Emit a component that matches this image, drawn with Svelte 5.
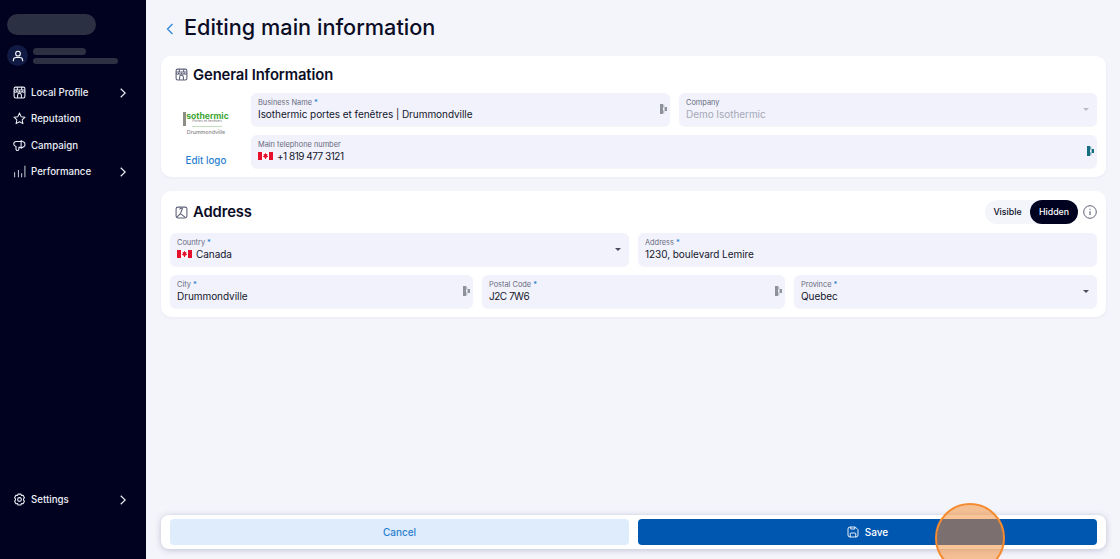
<script>
  const nav = [
    { label: "Local Profile", icon: "store", more: true },
    { label: "Reputation", icon: "star", more: false },
    { label: "Campaign", icon: "horn", more: false },
    { label: "Performance", icon: "bars", more: true }
  ];
</script>

{#snippet flag()}
  <svg class="flag" viewBox="0 0 15 8" aria-hidden="true">
    <rect width="15" height="8" fill="#fff" />
    <rect width="4" height="8" fill="#e8112d" />
    <rect x="11" width="4" height="8" fill="#e8112d" />
    <path d="M7.5 0.8 8.3 2.3 9.5 1.900 9.100 3.800 10.300 4.400 8.200 5.800 8 7H7L6.800 5.800 4.700 4.400 5.900 3.800 5.500 1.900 6.700 2.300Z" fill="#e8112d" />
  </svg>
{/snippet}

{#snippet ai(cls = "")}
  <svg class="ai {cls}" viewBox="0 0 7 10" aria-hidden="true">
    <rect x="0" y="0" width="3" height="10" fill="currentColor" />
    <rect x="3" y="0.6" width="1.300" height="3" fill="currentColor" opacity=".55" />
    <rect x="3" y="6.400" width="1.300" height="3" fill="currentColor" opacity=".55" />
    <rect x="4.600" y="3" width="2.400" height="4" fill="currentColor" />
  </svg>
{/snippet}

{#snippet storeIcon()}
  <svg class="ico" viewBox="0 0 24 24" fill="none" stroke="currentColor" stroke-width="2" aria-hidden="true">
    <rect x="2" y="2" width="20" height="20" rx="3" />
    <path d="M2 7.500h20M2 10c1.700 2 3.300 2 5 0 1.700 2 3.300 2 5 0 1.700 2 3.300 2 5 0 1.700 2 3.300 2 5 0M8.500 22v-5a3.500 3.500 0 0 1 7 0v5M8 2v5.500M16 2v5.500" />
  </svg>
{/snippet}

<div class="page">
  <aside class="side">
    <div class="brand"></div>
    <div class="user">
      <span class="avatar">
        <svg viewBox="0 0 24 24" fill="none" stroke="#fff" stroke-width="1.800" aria-hidden="true">
          <circle cx="12" cy="8" r="4" />
          <path d="M4 21v-1.500c0-3 2.500-5 5-5h6c2.500 0 5 2 5 5V21" />
        </svg>
      </span>
      <div class="user-lines">
        <span class="line short"></span>
        <span class="line long"></span>
      </div>
    </div>
    <nav>
      {#each nav as item}
        <div class="nav-item">
          {#if item.icon === "store"}
            {@render storeIcon()}
          {:else if item.icon === "star"}
            <svg class="ico" viewBox="0 0 24 24" fill="none" stroke="currentColor" stroke-width="1.900" stroke-linejoin="round" aria-hidden="true">
              <path d="M12 2l3 6.600 7.200.9-5.300 4.900 1.400 7.100-6.300-3.600-6.300 3.600 1.400-7.100L1.800 9.500 9 8.600z" />
            </svg>
          {:else if item.icon === "horn"}
            <svg class="ico" viewBox="0 0 24 24" fill="none" stroke="currentColor" stroke-width="2" stroke-linejoin="round" aria-hidden="true">
              <path d="M15 3l6 3.500c1.300.8 1.300 6.200 0 7L15 17zM15 4.500H6a4.500 4.500 0 0 0-1 8.900M15 15.500H10M5.500 13v5.500a2.700 2.700 0 0 0 5.400 0v-3" />
            </svg>
          {:else}
            <svg class="ico" viewBox="0 0 24 24" fill="none" stroke="currentColor" stroke-width="1.600" stroke-linecap="round" aria-hidden="true">
              <path d="M3 22v-8M10 22V10M16 22v-6M22 22V2" />
            </svg>
          {/if}
          <span>{item.label}</span>
          {#if item.more}
            <svg class="chev" viewBox="0 0 6 10" fill="none" stroke="currentColor" stroke-width="1.200" aria-hidden="true"><path d="M.7.7l4.500 4.300-4.500 4.300" /></svg>
          {/if}
        </div>
      {/each}
    </nav>
    <div class="nav-item settings">
      <svg class="ico" viewBox="0 0 24 24" fill="none" stroke="currentColor" stroke-width="2" stroke-linejoin="round" aria-hidden="true">
        <path d="M9.500 2h5l1.200 2.600 2.900-.3 2.500 4.300L19.400 11v2l1.700 2.400-2.500 4.300-2.900-.3L14.500 22h-5l-1.200-2.600-2.900.3-2.500-4.300L4.600 13v-2L2.900 8.600l2.500-4.300 2.900.3z" />
        <circle cx="12" cy="12" r="3.500" />
      </svg>
      <span>Settings</span>
      <svg class="chev" viewBox="0 0 6 10" fill="none" stroke="currentColor" stroke-width="1.200" aria-hidden="true"><path d="M.7.7l4.500 4.300-4.500 4.300" /></svg>
    </div>
  </aside>

  <main class="main">
    <header class="top">
      <svg class="back" viewBox="0 0 8 12" fill="none" stroke="#2f86d6" stroke-width="1.300" aria-hidden="true"><path d="M6.500 1l-5 5 5 5" /></svg>
      <h1>Editing main information</h1>
    </header>

    <section class="card general">
      <div class="card-title">
        <span class="title-ico">{@render storeIcon()}</span>
        <h2>General Information</h2>
      </div>
      <div class="general-body">
        <div class="logo-col">
          <div class="logo">
            <div class="logo-name"><i></i>sothermic</div>
            <div class="logo-sub">Portes et fenêtres</div>
            <div class="logo-city">Drummondville</div>
          </div>
          <span class="edit-logo">Edit logo</span>
        </div>
        <div class="general-fields">
          <div class="row g2">
            <div class="field">
              <label>Business Name<b>*</b></label>
              <div class="val">Isothermic portes et fenêtres | Drummondville</div>
              {@render ai("grey")}
            </div>
            <div class="field">
              <label>Company</label>
              <div class="val muted">Demo Isothermic</div>
              <span class="caret light"></span>
            </div>
          </div>
          <div class="field">
            <label>Main telephone number</label>
            <div class="val tight">{@render flag()}+1 819 477 3121</div>
            {@render ai("teal")}
          </div>
        </div>
      </div>
    </section>

    <section class="card address">
      <div class="card-title between">
        <div class="title-left">
          <span class="title-ico">
            <svg class="ico" viewBox="0 0 24 24" fill="none" stroke="currentColor" stroke-width="2" aria-hidden="true">
              <rect x="2" y="2" width="20" height="20" rx="3.500" />
              <path d="M3 21l7-7 3.500-9M10 14l9 7M8.500 6.500a4 4 0 0 1 6-1.500" />
            </svg>
          </span>
          <h2>Address</h2>
        </div>
        <div class="vis">
          <div class="toggle">
            <span class="opt">Visible</span>
            <span class="opt on">Hidden</span>
          </div>
          <svg class="info" viewBox="0 0 16 16" fill="none" stroke="#5b5f70" stroke-width="1.100" aria-hidden="true">
            <circle cx="8" cy="8" r="7.200" />
            <path d="M8 7v4.500M8 4.300v1.200" stroke-width="1.300" />
          </svg>
        </div>
      </div>
      <div class="row a1">
        <div class="field">
          <label>Country<b>*</b></label>
          <div class="val">{@render flag()}Canada</div>
          <span class="caret"></span>
        </div>
        <div class="field">
          <label>Address<b>*</b></label>
          <div class="val">1230, boulevard Lemire</div>
        </div>
      </div>
      <div class="row a2">
        <div class="field">
          <label>City<b>*</b></label>
          <div class="val">Drummondville</div>
          {@render ai("grey")}
        </div>
        <div class="field">
          <label>Postal Code<b>*</b></label>
          <div class="val tight">J2C 7W6</div>
          {@render ai("grey")}
        </div>
        <div class="field">
          <label>Province<b>*</b></label>
          <div class="val">Quebec</div>
          <span class="caret"></span>
        </div>
      </div>
    </section>

    <div class="actions">
      <button class="btn cancel">Cancel</button>
      <button class="btn save">
        <svg viewBox="0 0 24 24" fill="none" stroke="currentColor" stroke-width="1.800" aria-hidden="true">
          <path d="M2 6a4 4 0 0 1 4-4h10.500L22 7.500V18a4 4 0 0 1-4 4H6a4 4 0 0 1-4-4z" />
          <path d="M6.500 22v-6.500A1.500 1.500 0 0 1 8 14h8a1.500 1.500 0 0 1 1.500 1.500V22M7.500 2v4h8V2" />
        </svg>
        Save
      </button>
    </div>
  </main>

  <div class="click-mark"></div>
</div>

<style>
  :global(body) {
    margin: 0;
    font-family: "Inter", "Liberation Sans", sans-serif;
  }

  .page {
    position: relative;
    display: flex;
    width: 1120px;
    height: 559px;
    overflow: hidden;
    background: #f4f5fb;
    color: #0b0d26;
  }

  .side {
    width: 146px;
    flex: none;
    display: flex;
    flex-direction: column;
    box-sizing: border-box;
    padding: 14px 0 0 7px;
    background: #00021f;
    color: #eceef6;
  }

  .brand {
    width: 89px;
    height: 21px;
    border-radius: 11px;
    background: #2c3043;
  }

  .user {
    display: flex;
    align-items: center;
    gap: 5px;
    margin-top: 10px;
    height: 21px;
  }

  .avatar {
    width: 21px;
    height: 21px;
    border-radius: 50%;
    background: #101a42;
    display: flex;
    align-items: center;
    justify-content: center;
  }

  .avatar svg {
    width: 14px;
    height: 14px;
  }

  .user-lines {
    display: flex;
    flex-direction: column;
    gap: 3px;
  }

  .line {
    display: block;
    border-radius: 4px;
    background: #2c3043;
  }

  .line.short {
    width: 53px;
    height: 7px;
  }

  .line.long {
    width: 85px;
    height: 6px;
  }

  nav {
    margin-top: 16.500px;
    display: flex;
    flex-direction: column;
    gap: 6px;
  }

  .nav-item {
    display: flex;
    align-items: center;
    height: 20.300px;
    padding-left: 6px;
    font-size: 9.700px;
    font-weight: 500;
  }

  .nav-item span {
    margin-left: 5px;
  }

  .ico {
    width: 13px;
    height: 13px;
    flex: none;
    display: block;
  }

  .chev {
    width: 6px;
    height: 10px;
    margin-left: auto;
    margin-right: 20px;
    flex: none;
  }

  .settings {
    margin-top: auto;
    margin-bottom: 49px;
  }

  .main {
    flex: 1;
    min-width: 0;
    display: flex;
    flex-direction: column;
    box-sizing: border-box;
    padding: 0 14px 10px 15px;
  }

  .top {
    height: 56px;
    display: flex;
    align-items: center;
    flex: none;
  }

  .back {
    width: 8px;
    height: 12px;
    margin: 1px 10px 0 5px;
  }

  h1 {
    margin: 0;
    font-size: 21.700px;
    font-weight: 500;
    line-height: 1;
  }

  .card {
    background: #fff;
    border-radius: 10px;
    box-sizing: border-box;
    box-shadow: 0 1px 3px rgba(30, 35, 90, 0.05);
  }

  .general {
    height: 121px;
    padding: 9px 9px 0;
  }

  .address {
    height: 126px;
    margin-top: 14px;
    padding: 9px 9px 0;
  }

  .card-title {
    display: flex;
    align-items: center;
    height: 19px;
    gap: 5px;
    padding-left: 5px;
  }

  .between {
    height: 24px;
    justify-content: space-between;
  }

  .title-left {
    display: flex;
    align-items: center;
    gap: 5px;
  }

  .title-ico {
    color: #5e6278;
    display: block;
  }

  h2 {
    margin: 0;
    font-size: 14.800px;
    font-weight: 600;
    letter-spacing: -0.1px;
  }

  .general-body {
    display: flex;
    margin-top: 9px;
    gap: 9px;
  }

  .logo-col {
    width: 72px;
    flex: none;
    text-align: center;
  }

  .logo {
    height: 50px;
    padding-top: 19px;
    box-sizing: border-box;
    text-align: center;
  }

  .logo-name {
    font-size: 8.600px;
    font-weight: 700;
    color: #3fa535;
    line-height: 9px;
    white-space: nowrap;
  }

  .logo-name i {
    display: inline-block;
    width: 3px;
    height: 14px;
    background: #8c8f86;
    vertical-align: top;
  }

  .logo-sub {
    width: 30px;
    margin: -8px 0 0 22px;
    padding-bottom: 2px;
    border-bottom: 1px solid #bfe0bb;
    font-size: 3.500px;
    line-height: 6px;
    color: #777;
    white-space: nowrap;
  }

  .logo-city {
    font-size: 5.300px;
    line-height: 7px;
    margin-top: 2px;
    color: #888;
    font-weight: 500;
  }

  .edit-logo {
    display: block;
    margin-top: 12px;
    font-size: 9.800px;
    font-weight: 500;
    color: #2b7fd0;
  }

  .general-fields {
    flex: 1;
    min-width: 0;
    display: flex;
    flex-direction: column;
    gap: 9px;
  }

  .row {
    display: grid;
    gap: 9px;
  }

  .g2 {
    grid-template-columns: 419px 1fr;
  }

  .a1 {
    margin-top: 9px;
    grid-template-columns: 459px 1fr;
  }

  .a2 {
    margin-top: 9px;
    grid-template-columns: 303px 303px 1fr;
  }

  .field {
    position: relative;
    height: 33px;
    box-sizing: border-box;
    padding: 5px 7px 0;
    border-radius: 6px;
    background: #f1f2fb;
    box-shadow: 0 1px 1px rgba(30, 35, 90, 0.05);
  }

  label {
    display: block;
    font-size: 7.400px;
    line-height: 9px;
    color: #686b80;
  }

  label b {
    margin-left: 2px;
    color: #2b7fd0;
    font-weight: 500;
  }

  .val {
    display: flex;
    align-items: center;
    font-size: 10px;
    line-height: 14px;
    letter-spacing: -0.05px;
    color: #14162c;
    white-space: nowrap;
  }

  .tight {
    letter-spacing: -0.5px;
  }

  .muted {
    color: #a5a8b8;
  }

  .flag {
    width: 15px;
    height: 8px;
    margin-right: 4px;
    flex: none;
  }

  .ai {
    position: absolute;
    right: 3px;
    top: 11px;
    width: 7px;
    height: 10px;
  }

  .grey {
    color: #8f919d;
  }

  .teal {
    color: #156f80;
  }

  .caret {
    position: absolute;
    right: 8px;
    top: 15px;
    border-left: 3.500px solid transparent;
    border-right: 3.500px solid transparent;
    border-top: 3.500px solid #4a4d60;
  }

  .caret.light {
    border-top-color: #b9bbc8;
  }

  .vis {
    display: flex;
    align-items: center;
    gap: 5px;
  }

  .toggle {
    display: flex;
    align-items: center;
    height: 24px;
    border-radius: 12px;
    background: #f4f5fb;
    font-size: 8.800px;
    font-weight: 500;
  }

  .opt {
    width: 45px;
    text-align: center;
    line-height: 24px;
  }

  .opt.on {
    width: 48px;
    background: #00021f;
    color: #fff;
    border-radius: 12px;
  }

  .info {
    width: 14px;
    height: 14px;
  }

  .actions {
    margin-top: auto;
    height: 34px;
    box-sizing: border-box;
    padding: 4px 9px 4px;
    display: grid;
    grid-template-columns: 459px 1fr;
    gap: 9px;
    border-radius: 8px;
    background: #fff;
    box-shadow: 0 1px 6px rgba(30, 35, 90, 0.25);
  }

  .btn {
    display: flex;
    align-items: center;
    justify-content: center;
    gap: 6px;
    border: 0;
    padding: 0;
    border-radius: 4px;
    font: 500 10px "Inter", "Liberation Sans", sans-serif;
  }

  .cancel {
    background: #deecfb;
    color: #2b7fd0;
  }

  .save {
    background: #0057b0;
    color: #fff;
  }

  .save svg {
    width: 12px;
    height: 12px;
  }

  .click-mark {
    position: absolute;
    left: 935px;
    top: 503px;
    width: 70px;
    height: 70px;
    box-sizing: border-box;
    border: 2px solid #f58a2e;
    border-radius: 50%;
    background: rgba(245, 138, 46, 0.5);
  }
</style>
